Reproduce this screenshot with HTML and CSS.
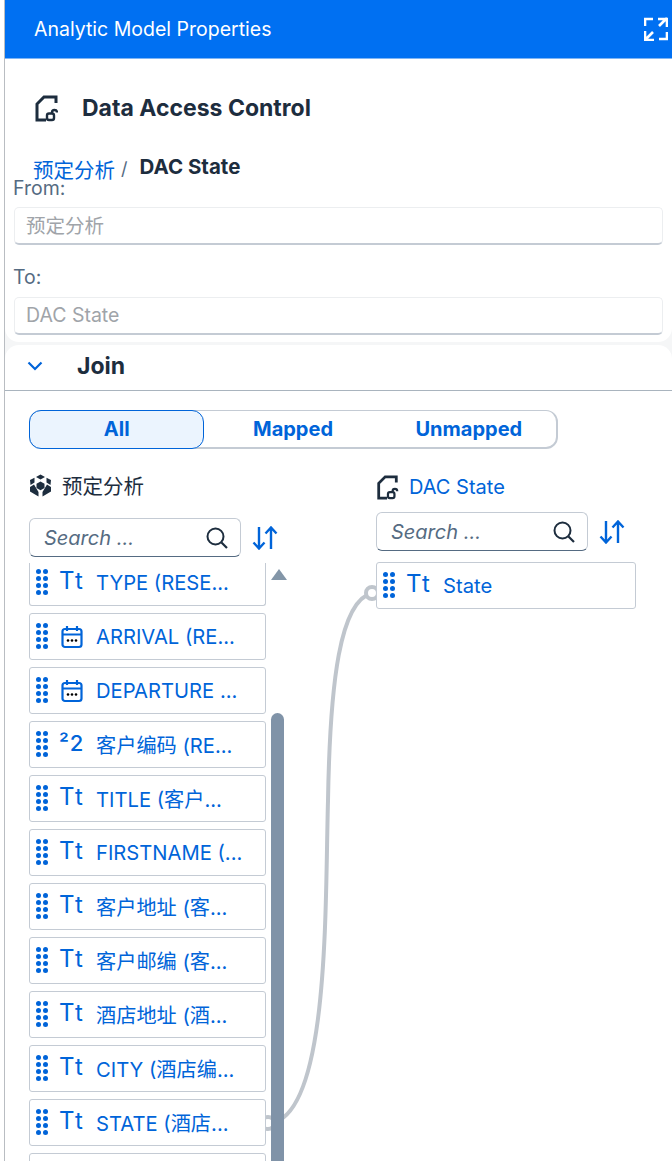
FILE: index.html
```html
<!DOCTYPE html>
<html>
  <head>
    <meta charset="UTF-8">
    <meta name="viewport" content="width=device-width, initial-scale=1.0">
    <title>Analytic Model Properties</title>
    <link rel="stylesheet" href="styles.css">
  </head>
  <body>
    <svg class="defs" width="0" height="0">
      <symbol id="grip" viewBox="0 0 12 26">
        <circle cx="2.500" cy="2.500" r="2.500"/><circle cx="9.500" cy="2.500" r="2.500"/>
        <circle cx="2.500" cy="9.500" r="2.500"/><circle cx="9.500" cy="9.500" r="2.500"/>
        <circle cx="2.500" cy="16.500" r="2.500"/><circle cx="9.500" cy="16.500" r="2.500"/>
        <circle cx="2.500" cy="23.500" r="2.500"/><circle cx="9.500" cy="23.500" r="2.500"/>
      </symbol>
      <symbol id="cal" viewBox="0 0 22 24">
        <path d="M4 4H18A2.500 2.500 0 0 1 20.500 6.500V19.500A2.500 2.500 0 0 1 18 22H4A2.500 2.500 0 0 1 1.500 19.500V6.500A2.500 2.500 0 0 1 4 4ZM1.500 9.500H20.500M6 1V6M16 1V6" fill="none" stroke="currentColor" stroke-width="2.200"/>
        <circle cx="7" cy="15.500" r="1.300"/><circle cx="11" cy="15.500" r="1.300"/><circle cx="15" cy="15.500" r="1.300"/>
      </symbol>
      <symbol id="doc" viewBox="0 0 23 27">
        <path d="M21 8V2H9L2 9V25H11" fill="none" stroke="currentColor" stroke-width="3"/>
        <rect x="12" y="18.500" width="7" height="6.500" rx="2" fill="none" stroke="currentColor" stroke-width="2.400"/>
        <path d="M17 18.500V17.500A2.500 2.500 0 0 1 22 17.500" fill="none" stroke="currentColor" stroke-width="2.400"/>
      </symbol>
      <symbol id="find" viewBox="0 0 22 22">
        <circle cx="9.500" cy="9.500" r="8" fill="none" stroke="currentColor" stroke-width="2"/>
        <path d="M15.500 15.500L21 21" fill="none" stroke="currentColor" stroke-width="2.200"/>
      </symbol>
      <symbol id="sort" viewBox="0 0 26 24">
        <path d="M7 1V22M1.500 16.500L7 22.500L12.500 16.500M19 23V2M13.500 7.500L19 1.500L24.500 7.500" fill="none" stroke="currentColor" stroke-width="2.400"/>
      </symbol>
    </svg>

    <div class="panel">
      <header class="titlebar">
        <span>Analytic Model Properties</span>
        <svg class="expand" width="24" height="24" viewBox="0 0 24 24">
          <path d="M1 9V2H9M15 22H23V15M14 2H23V10M23 1L15 9M1 23L9 15M1 14V23H10" fill="none" stroke="#fff" stroke-width="2.600"/>
        </svg>
      </header>

      <section class="details">
        <div class="heading">
          <svg class="heading-icon"><use href="#doc"/></svg>
          <h2>Data Access Control</h2>
        </div>
        <div class="crumbs">
          <a>预定分析</a><span class="slash">/</span><b>DAC State</b>
        </div>
        <label class="field-label from">From:</label>
        <div class="field">预定分析</div>
        <label class="field-label to">To:</label>
        <div class="field">DAC State</div>
      </section>

      <section class="join">
        <div class="join-head">
          <svg class="chevron" width="16" height="10" viewBox="0 0 16 10"><path d="M1.500 1.500L8 8L14.500 1.500" fill="none" stroke="#0064d9" stroke-width="2.200"/></svg>
          <h3>Join</h3>
        </div>

        <div class="segments">
          <div class="seg seg-active">All</div>
          <div class="seg seg-mid">Mapped</div>
          <div class="seg seg-last">Unmapped</div>
        </div>

        <!-- mapping line between the two lists -->
        <svg class="connector" width="120" height="550" viewBox="0 0 120 550">
          <path d="M6 541C64 529 59 319 62 219C64 99 74 19 106 11" fill="none" stroke="#bfc5cc" stroke-width="4"/>
          <circle cx="106" cy="11" r="6" fill="#fff" stroke="#bfc5cc" stroke-width="4"/>
          <circle cx="2" cy="541" r="6" fill="#fff" stroke="#bfc5cc" stroke-width="4"/>
        </svg>

        <div class="columns">
          <div class="col-left">
            <div class="col-title">
              <svg class="cube" width="23" height="23" viewBox="0 0 23 23">
                <path d="M11.500 0.500L16 3L11.500 5.500L7 3ZM1 6L5.500 3.800L5.500 8.500L1.500 11ZM22 6L17.500 3.800V8.500L21.500 11ZM1 13L5 10.500L9.500 18V22.500L1 17.500ZM22 13L18 10.500L13.500 18V22.500L22 17.500Z" fill="#1d2d3e"/>
                <path d="M11.500 7.500L15.500 9.800V14L11.500 16.300L7.500 14V9.800Z" fill="#1d2d3e"/>
              </svg>
              <span>预定分析</span>
            </div>
            <div class="search-row">
              <div class="search"><i>Search ...</i><svg class="find"><use href="#find"/></svg></div>
              <svg class="sort"><use href="#sort"/></svg>
            </div>
            <div class="list-wrap">
              <div class="list">
                <div class="item first"><svg class="grip"><use href="#grip"/></svg><span class="type">Tt</span><span class="name">TYPE (RESE...</span></div>
                <div class="item"><svg class="grip"><use href="#grip"/></svg><svg class="cal"><use href="#cal"/></svg><span class="name">ARRIVAL (RE...</span></div>
                <div class="item"><svg class="grip"><use href="#grip"/></svg><svg class="cal"><use href="#cal"/></svg><span class="name">DEPARTURE ...</span></div>
                <div class="item"><svg class="grip"><use href="#grip"/></svg><span class="type num">²2</span><span class="name">客户编码 (RE...</span></div>
                <div class="item"><svg class="grip"><use href="#grip"/></svg><span class="type">Tt</span><span class="name">TITLE (客户...</span></div>
                <div class="item"><svg class="grip"><use href="#grip"/></svg><span class="type">Tt</span><span class="name">FIRSTNAME (...</span></div>
                <div class="item"><svg class="grip"><use href="#grip"/></svg><span class="type">Tt</span><span class="name">客户地址 (客...</span></div>
                <div class="item"><svg class="grip"><use href="#grip"/></svg><span class="type">Tt</span><span class="name">客户邮编 (客...</span></div>
                <div class="item"><svg class="grip"><use href="#grip"/></svg><span class="type">Tt</span><span class="name">酒店地址 (酒...</span></div>
                <div class="item"><svg class="grip"><use href="#grip"/></svg><span class="type">Tt</span><span class="name">CITY (酒店编...</span></div>
                <div class="item"><svg class="grip"><use href="#grip"/></svg><span class="type">Tt</span><span class="name">STATE (酒店...</span></div>
                <div class="item"></div>
              </div>
              <div class="scrollbar">
                <div class="scroll-up"></div>
                <div class="scroll-thumb"></div>
              </div>
            </div>
          </div>

          <div class="col-right">
            <div class="col-title link">
              <svg class="doc-small"><use href="#doc"/></svg>
              <span>DAC State</span>
            </div>
            <div class="search-row">
              <div class="search"><i>Search ...</i><svg class="find"><use href="#find"/></svg></div>
              <svg class="sort"><use href="#sort"/></svg>
            </div>
            <div class="item wide"><svg class="grip"><use href="#grip"/></svg><span class="type">Tt</span><span class="name">State</span></div>
          </div>
        </div>
      </section>
    </div>
  </body>
</html>
```

FILE: styles.css
```css
* {
  box-sizing: border-box;
  margin: 0;
  padding: 0;
}
html, body {
  height: 1161px;
  overflow: hidden;
}
body {
  background: #fff;
  font-family: Inter, "Noto Sans CJK SC", sans-serif;
  color: #1d2d3e;
}
.defs {
  position: absolute;
}
.panel {
  margin-left: 4px;
  height: 1161px;
  border-left: 1px solid #b9bdc2;
  background: #f5f6f7;
  overflow: hidden;
}

/* title bar */
.titlebar {
  height: 59px;
  background: #0070f2;
  border-bottom: 1px solid #7fb5f5;
  color: #fff;
  display: flex;
  align-items: center;
  justify-content: space-between;
  padding: 0 4px 1px 29px;
  font-size: 19.500px;
}

/* details block */
.details {
  height: 283px;
  background: #fff;
  border-radius: 0 0 14px 14px;
  padding: 0 9px;
}
.heading {
  display: flex;
  align-items: center;
  padding: 36px 0 0 21px;
}
.heading-icon {
  width: 23px;
  height: 27px;
  color: #1d2d3e;
}
.heading h2 {
  margin-left: 24px;
  font-size: 23px;
  font-weight: 700;
  line-height: 27px;
}
.crumbs {
  position: relative;
  z-index: 1;
  display: flex;
  align-items: flex-start;
  height: 58px;
  padding: 32px 0 0 19px;
  background: #fff;
  line-height: 28px;
}
.crumbs a {
  color: #0064d9;
  font-size: 20.500px;
  margin-top: 3px;
}
.crumbs .slash {
  margin: 1px 12px 0 6px;
  color: #556b82;
  font-size: 18px;
}
.crumbs b {
  margin-top: -1px;
  font-size: 20.500px;
  font-weight: 700;
}
.field-label {
  display: block;
  color: #556b82;
  font-size: 19.500px;
  line-height: 24px;
}
.from {
  margin-top: -4px;
  margin-bottom: 7px;
  margin-left: -1px;
}
.to {
  margin-top: 20px;
  margin-bottom: 8px;
  margin-left: -1px;
}
.field {
  height: 38px;
  border: 1px solid #eceef0;
  border-bottom: 2px solid #c4cbd4;
  border-radius: 5px;
  padding: 0 11px;
  color: #a0a4a9;
  font-size: 19.500px;
  line-height: 36px;
}
.to + .field {
  line-height: 34px;
}

/* join block */
.join {
  position: relative;
  height: 820px;
  margin-top: 3px;
  background: #fff;
  border-radius: 14px 14px 0 0;
}
.join-head {
  height: 46px;
  border-bottom: 1px solid #a9b4be;
  display: flex;
  align-items: center;
  padding: 0 0 4px 22px;
}
.join-head h3 {
  margin-left: 34px;
  font-size: 23px;
  font-weight: 700;
}
.segments {
  display: flex;
  width: 529px;
  height: 39px;
  margin: 19px 0 0 24px;
  border: 1px solid #c4cbd4;
  border-bottom-width: 2px;
  border-right-width: 2px;
  border-radius: 12px;
  color: #0064d9;
  font-size: 20px;
  font-weight: 700;
}
.seg {
  display: flex;
  align-items: center;
  justify-content: center;
}
.seg-active {
  width: 176px;
  margin: -1px 0 -2px -1px;
  padding-bottom: 2px;
  background: #ebf4fe;
  border: 1px solid #0064d9;
  border-radius: 12px;
}
.seg-mid {
  width: 178px;
}
.seg-last {
  width: 175px;
}

.columns {
  display: flex;
  padding-left: 24px;
}
.col-left {
  width: 347px;
}
.col-title {
  display: flex;
  align-items: center;
  height: 24px;
  margin-top: 24px;
  font-size: 20.500px;
}
.col-title span {
  margin-left: 10px;
}
.col-right .col-title {
  margin-top: 26px;
  color: #0064d9;
  font-size: 20px;
}
.doc-small {
  width: 23px;
  height: 25px;
  color: #1d2d3e;
}
.search-row {
  display: flex;
  align-items: center;
  margin-top: 21px;
}
.col-right .search-row {
  margin-top: 13px;
}
.search {
  display: flex;
  align-items: center;
  justify-content: space-between;
  width: 212px;
  height: 39px;
  padding: 0 12px 0 14px;
  border: 1px solid #c4cbd4;
  border-bottom: 1px solid #556b82;
  border-radius: 6px;
  color: #556b82;
  font-size: 20px;
}
.find {
  width: 22px;
  height: 22px;
  color: #1d2d3e;
}
.sort {
  width: 26px;
  height: 24px;
  margin-left: 11px;
  color: #0064d9;
}

/* field lists */
.list-wrap {
  display: flex;
  height: 610px;
  margin-top: 6px;
  overflow: hidden;
}
.list {
  width: 237px;
}
.item {
  position: relative;
  z-index: 1;
  display: flex;
  align-items: center;
  height: 47px;
  margin-bottom: 7px;
  padding-left: 6px;
  background: #fff;
  border: 1px solid #c4cbd4;
  border-radius: 3px;
  color: #0064d9;
  white-space: nowrap;
}
.item.first {
  height: 43px;
  border-top: 0;
  border-radius: 0 0 3px 3px;
  padding-bottom: 3px;
}
.item.wide {
  width: 260px;
  margin-top: 11px;
}
.grip {
  flex: none;
  width: 12px;
  height: 26px;
  margin-top: -2px;
  fill: #0064d9;
}
.type {
  width: 36px;
  margin-left: 11px;
  font-size: 24px;
  letter-spacing: 3px;
  line-height: 28px;
  margin-top: -3px;
}
.type + .name {
  margin-left: 1px;
}
.num {
  font-weight: 500;
  font-size: 22px;
  letter-spacing: 1px;
}
.cal {
  width: 22px;
  height: 24px;
  margin: 0 13px 0 13px;
  flex: none;
}
.name {
  font-size: 20.200px;
}
.scrollbar {
  position: relative;
  width: 18px;
  margin-left: 5px;
}
.scroll-up {
  width: 0;
  height: 0;
  margin-top: 6px;
  border-left: 8px solid transparent;
  border-right: 8px solid transparent;
  border-bottom: 11px solid #8396a8;
}
.scroll-thumb {
  width: 13px;
  height: 460px;
  margin-top: 133px;
  background: #8093a8;
  border-radius: 7px 7px 0 0;
}

.connector {
  position: absolute;
  left: 261px;
  top: 237px;
}
```
